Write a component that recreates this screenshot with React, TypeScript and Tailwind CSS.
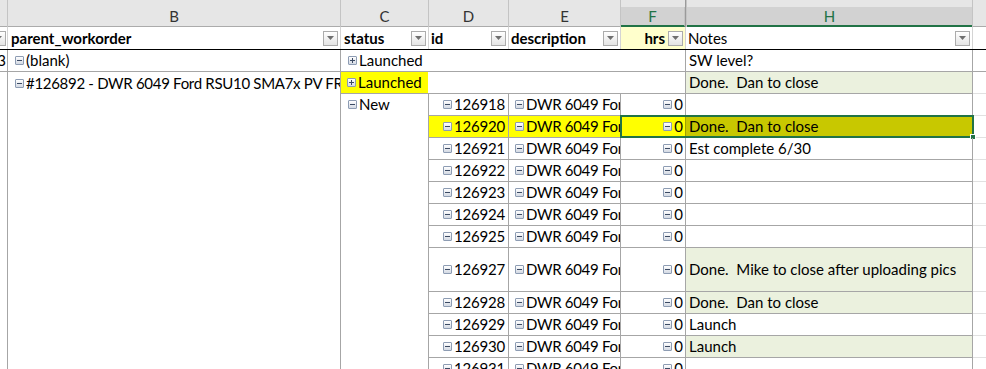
import React from 'react';

const font = "font-['Lato',sans-serif]";

function Tog({ plus }: { plus?: boolean }) {
  return (
    <span className="relative inline-block w-[9px] h-[9px] border border-[#8d9cb3] bg-linear-to-b from-white to-[#d3d9e3] rounded-[1px] mr-[2px] shrink-0">
      <span className="absolute left-[1px] right-[1px] top-[3px] h-[1px] bg-[#3b4a63]" />
      {plus && <span className="absolute top-[1px] bottom-[1px] left-[3px] w-[1px] bg-[#3b4a63]" />}
    </span>
  );
}

function Drop() {
  return (
    <span className="flex items-center justify-center w-[15px] h-[15px] border border-[#acacac] bg-linear-to-b from-white to-[#e4e4e4] shrink-0">
      <svg width="7" height="4" viewBox="0 0 7 4">
        <path d="M0 0h7L3.5 4z" fill="#6f6f6f" />
      </svg>
    </span>
  );
}

type Row = { id: string; note?: string; hl?: boolean; green?: boolean; tall?: boolean; status?: string };

const rows: Row[] = [
  { id: '126918', status: 'New' },
  { id: '126920', note: 'Done.  Dan to close', hl: true },
  { id: '126921', note: 'Est complete 6/30' },
  { id: '126922' },
  { id: '126923' },
  { id: '126924' },
  { id: '126925' },
  { id: '126927', note: 'Done.  Mike to close after uploading pics', green: true, tall: true },
  { id: '126928', note: 'Done.  Dan to close', green: true },
  { id: '126929', note: 'Launch' },
  { id: '126930', note: 'Launch', green: true },
  { id: '126931' },
];

const bd = 'border-[#a6a6a6]';

function LetterRow() {
  const cell = 'h-[27px] border-r border-[#c4c4c4] flex items-end';
  const letter = (l: string, w: string) => (
    <div className={`${cell} ${w}`}>
      <div className="w-full h-[20px] flex items-center justify-center text-[15px] border-b border-[#ababab] text-[#333]">
        {l}
      </div>
    </div>
  );
  return (
    <div className="flex bg-[#e6e6e6]">
      <div className={`${cell} w-[8px]`}>
        <div className="w-full h-[20px] border-b border-[#ababab]" />
      </div>
      {letter('B', 'w-[333px]')}
      {letter('C', 'w-[88px]')}
      {letter('D', 'w-[80px]')}
      {letter('E', 'w-[112px]')}
      <div className={`${cell} w-[65px] border-r-[#9a9a9a]`}>
        <div className="w-full h-[20px] flex items-center justify-center text-[15px] bg-[#d2d2d2] border-b-2 border-[#217346] text-[#217346] border-r border-r-[#c4c4c4]">
          F
        </div>
      </div>
      <div className={`${cell} w-[287px] border-l border-l-[#c4c4c4]`}>
        <div className="w-full h-[20px] flex items-center justify-center text-[15px] bg-[#d2d2d2] border-b-2 border-[#217346] text-[#217346]">
          H
        </div>
      </div>
      <div className="flex-1 h-[27px] flex items-end">
        <div className="w-full h-[20px] border-b border-[#ababab]" />
      </div>
    </div>
  );
}

function HeaderRow() {
  const c = 'h-[22px] border-r border-[#d4d4d4] flex items-center overflow-hidden';
  return (
    <div className="flex border-b border-black font-bold">
      <div className={`${c} w-[8px] justify-end`}>
        <span className="mr-[1px] flex">
          <Drop />
        </span>
      </div>
      <div className={`${c} w-[333px] pl-[3px] pr-[2px] justify-between`}>
        <span>parent_workorder</span>
        <Drop />
      </div>
      <div className={`${c} w-[88px] pl-[3px] pr-[2px] justify-between`}>
        <span>status</span>
        <Drop />
      </div>
      <div className={`${c} w-[80px] pl-[2px] pr-[2px] justify-between`}>
        <span>id</span>
        <Drop />
      </div>
      <div className={`${c} w-[112px] pl-[2px] pr-[2px] justify-between`}>
        <span>description</span>
        <Drop />
      </div>
      <div className={`${c} w-[65px] pr-[2px] justify-end gap-[3px] bg-[#ffffcc]`}>
        <span>hrs</span>
        <Drop />
      </div>
      <div className={`${c} w-[287px] pl-[2px] pr-[2px] justify-between font-normal`}>
        <span>Notes</span>
        <Drop />
      </div>
      <div className="flex-1" />
    </div>
  );
}

function DataRow({ r }: { r: Row }) {
  const h = r.tall ? 'h-[44px]' : 'h-[22px]';
  const yel = r.hl ? 'bg-[#ffff00]' : '';
  const noteBg = r.hl ? 'bg-[#c8c800]' : r.green ? 'bg-[#ebf1de]' : '';
  return (
    <div className={`flex ${h} relative`}>
      <div className={`w-[8px] border-r ${bd}`} />
      <div className={`w-[333px] border-r ${bd}`} />
      <div className={`w-[88px] border-r ${bd} flex items-start pl-[7px] pt-[3px]`}>
        {r.status && (
          <span className="flex items-center">
            <Tog />
            {r.status}
          </span>
        )}
      </div>
      <div className={`w-[80px] border-r border-b ${bd} ${yel} flex items-center justify-end pr-[3px] tracking-[-0.2px]`}>
        <Tog />
        {r.id}
      </div>
      <div className={`w-[112px] border-r border-b ${bd} ${yel} flex items-center pl-[6px] overflow-hidden whitespace-nowrap tracking-[-0.3px]`}>
        <Tog />
        DWR 6049 Ford RSU10 SMA7x PV FRM
      </div>
      <div className={`w-[65px] border-r border-b ${bd} ${yel} ${r.hl ? 'border-r-[#a0a000]' : ''} flex items-center justify-end pr-[2px]`}>
        <Tog />0
      </div>
      <div className={`w-[287px] border-r border-b ${bd} ${noteBg} flex items-center pl-[3px] whitespace-pre`}>
        {r.note}
      </div>
      <div className="flex-1 border-b border-[#e1e1e1]" />
      {r.hl && (
        <div className="absolute left-[620px] -top-[1px] w-[354px] h-[23px] border-2 border-[#217346]">
          <div className="absolute -right-[4px] -bottom-[4px] w-[6px] h-[6px] bg-[#217346] border border-white" />
        </div>
      )}
    </div>
  );
}

export default function App() {
  return (
    <div className={`w-[986px] h-[369px] overflow-hidden bg-white text-black text-[15px] leading-none ${font}`}>
      <LetterRow />
      <HeaderRow />
      {/* (blank) row */}
      <div className="flex h-[22px] border-b border-[#a6a6a6]">
        <div className={`w-[8px] border-r ${bd} flex items-center justify-end overflow-hidden pr-[1px]`}>
          <span>13</span>
        </div>
        <div className={`w-[333px] border-r ${bd} flex items-center pl-[7px]`}>
          <Tog />
          (blank)
        </div>
        <div className={`w-[345px] border-r ${bd} flex items-center pl-[7px]`}>
          <Tog plus />
          Launched
        </div>
        <div className={`w-[287px] border-r ${bd} flex items-center pl-[3px]`}>SW level?</div>
        <div className="flex-1" />
      </div>
      {/* parent row */}
      <div className="flex h-[22px]">
        <div className={`w-[8px] border-r ${bd}`} />
        <div className={`w-[333px] border-r ${bd} flex items-center pl-[7px] overflow-hidden whitespace-nowrap tracking-[-0.3px]`}>
          <Tog />
          #126892 - DWR 6049 Ford RSU10 SMA7x PV FRM
        </div>
        <div className={`w-[345px] border-r border-b ${bd} flex`}>
          <div className="w-[87px] bg-[#ffff00] flex items-center pl-[6px]">
            <Tog plus />
            Launched
          </div>
        </div>
        <div className={`w-[287px] border-r border-b ${bd} bg-[#ebf1de] flex items-center pl-[3px] whitespace-pre`}>
          Done.  Dan to close
        </div>
        <div className="flex-1 border-b border-[#e1e1e1]" />
      </div>
      {rows.map((r) => (
        <DataRow key={r.id} r={r} />
      ))}
    </div>
  );
}
